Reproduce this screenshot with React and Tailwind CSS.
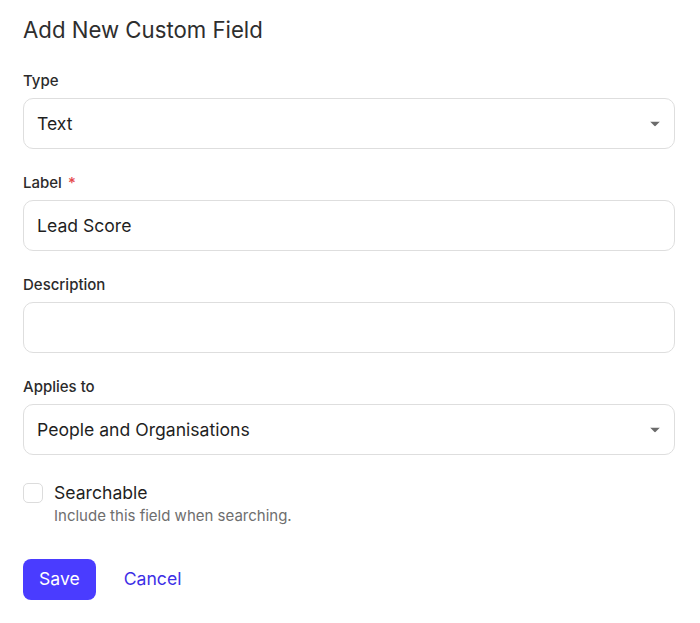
import React from 'react';

const Caret = () => (
  <svg width="10" height="5" viewBox="0 0 10 5" className="absolute right-[14px] top-1/2 -translate-y-1/2">
    <path d="M0 0h10L5 5z" fill="#6b6b6b" />
  </svg>
);

const Field = ({ label, required, value, select }) => (
  <div className="flex flex-col">
    <label className="text-[15px] font-medium text-[#2b2b2b] leading-[20px] mt-[1px] mb-[7px] flex items-center gap-[6px]">
      {label}
      {required && <span className="text-[#e5484d]">*</span>}
    </label>
    <div className="relative h-[51px] rounded-[10px] border border-[#dedede] bg-white flex items-center px-[13px]">
      <span className="text-[17.6px] text-[#1f1f1f] pt-[2px]">{value}</span>
      {select && <Caret />}
    </div>
  </div>
);

const App = () => {
  return (
    <div className="min-h-screen bg-white pl-[23px] pr-[25px] pt-[14px] font-['Inter',sans-serif]">
      <h1 className="text-[22.2px] leading-[32px] text-[#2e2e2e] mb-[24px]">Add New Custom Field</h1>
      <div className="flex flex-col gap-[23px]">
        <Field label="Type" value="Text" select />
        <Field label="Label" required value="Lead Score" />
        <Field label="Description" value="" />
        <Field label="Applies to" value="People and Organisations" select />
      </div>
      <div className="flex items-start gap-[11px] mt-[27px]">
        <div className="w-[20px] h-[20px] rounded-[5px] border border-[#dcdcdc] bg-white mt-[1px]" />
        <div className="flex flex-col">
          <span className="text-[17.6px] leading-[22px] text-[#1f1f1f]">Searchable</span>
          <span className="text-[15px] leading-[24px] text-[#6e6e6e]">Include this field when searching.</span>
        </div>
      </div>
      <div className="flex items-center gap-[28px] mt-[31px]">
        <button className="h-[41px] px-[16px] rounded-[8px] bg-[#4a3cff] text-white text-[17.6px]">Save</button>
        <button className="text-[17.6px] text-[#3d2fe6]">Cancel</button>
      </div>
    </div>
  );
};

export default App;
